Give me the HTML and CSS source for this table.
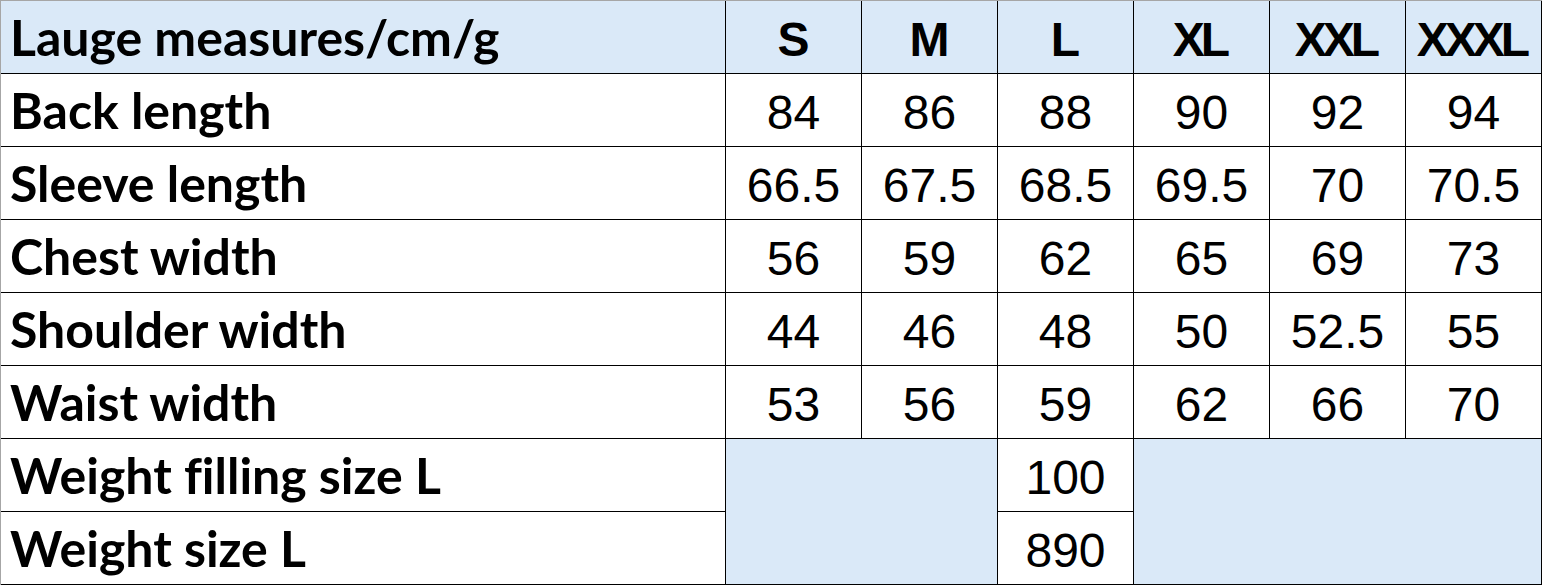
FILE: index.html
```html
<!DOCTYPE html>
<html lang="en">
<head>
<meta charset="utf-8">
<title>Lauge measures</title>
<link rel="stylesheet" href="styles.css">
</head>
<body>
<div class="sheet">
  <div class="cell head label">Lauge measures/cm/g</div>
  <div class="cell head size">S</div>
  <div class="cell head size">M</div>
  <div class="cell head size">L</div>
  <div class="cell head size">XL</div>
  <div class="cell head size">XXL</div>
  <div class="cell head size">XXXL</div>

  <div class="cell label">Back length</div>
  <div class="cell num">84</div>
  <div class="cell num">86</div>
  <div class="cell num">88</div>
  <div class="cell num">90</div>
  <div class="cell num">92</div>
  <div class="cell num">94</div>

  <div class="cell label">Sleeve length</div>
  <div class="cell num">66.5</div>
  <div class="cell num">67.5</div>
  <div class="cell num">68.5</div>
  <div class="cell num">69.5</div>
  <div class="cell num">70</div>
  <div class="cell num">70.5</div>

  <div class="cell label">Chest width</div>
  <div class="cell num">56</div>
  <div class="cell num">59</div>
  <div class="cell num">62</div>
  <div class="cell num">65</div>
  <div class="cell num">69</div>
  <div class="cell num">73</div>

  <div class="cell label">Shoulder width</div>
  <div class="cell num">44</div>
  <div class="cell num">46</div>
  <div class="cell num">48</div>
  <div class="cell num">50</div>
  <div class="cell num">52.5</div>
  <div class="cell num">55</div>

  <div class="cell label">Waist width</div>
  <div class="cell num">53</div>
  <div class="cell num">56</div>
  <div class="cell num">59</div>
  <div class="cell num">62</div>
  <div class="cell num">66</div>
  <div class="cell num">70</div>

  <div class="cell label">Weight filling size L</div>
  <div class="cell blank blank-left"></div>
  <div class="cell num">100</div>
  <div class="cell blank blank-right"></div>

  <div class="cell label">Weight size L</div>
  <div class="cell num">890</div>
</div>
</body>
</html>
```

FILE: styles.css
```css
html, body {
  margin: 0;
  padding: 0;
  background: #ffffff;
}

.sheet {
  display: grid;
  grid-template-columns: 724px repeat(6, 135px);
  grid-template-rows: repeat(8, 72px);
  gap: 1px;
  width: max-content;
  background: #000000;
  border-top: 1px solid #a6a6a6;
  border-left: 1px solid #a6a6a6;
  padding: 0 1px 1px 0;
}

.cell {
  background: #ffffff;
  color: #000000;
  display: flex;
  align-items: center;
  justify-content: center;
  line-height: 72px;
  white-space: nowrap;
  overflow: hidden;
}

.head {
  background: #dae9f8;
}

.label {
  justify-content: flex-start;
  padding-left: 9px;
  font-family: "Lato", "Noto Sans", sans-serif;
  font-weight: 700;
  font-size: 50px;
  font-variant-ligatures: none;
}

.size {
  font-family: "Liberation Sans", Arial, sans-serif;
  font-weight: 700;
  font-size: 48px;
  letter-spacing: -4px;
  padding-top: 6px;
  padding-right: 4px;
}

.num {
  font-family: "Liberation Sans", Arial, sans-serif;
  font-weight: 400;
  font-size: 48px;
  padding-top: 6px;
}

.blank {
  background: #dae9f8;
}

.blank-left {
  grid-column: 2 / span 2;
  grid-row: 7 / span 2;
}

.blank-right {
  grid-column: 5 / span 3;
  grid-row: 7 / span 2;
}
```
